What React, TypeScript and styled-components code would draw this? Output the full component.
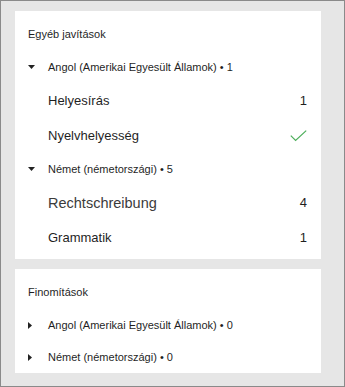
import React from 'react';
import styled, { createGlobalStyle } from 'styled-components';

const GlobalStyle = createGlobalStyle`
  html, body {
    margin: 0;
    padding: 0;
    background: #e6e6e6;
  }
  * {
    box-sizing: border-box;
  }
`;

interface Item {
  label: string;
  count?: number;
  size: number;
  color?: string;
  done?: boolean;
}

interface Language {
  name: string;
  total: number;
  open: boolean;
  items: Item[];
}

const corrections: Language[] = [
  {
    name: 'Angol (Amerikai Egyesült Államok)',
    total: 1,
    open: true,
    items: [
      { label: 'Helyesírás', count: 1, size: 13 },
      { label: 'Nyelvhelyesség', size: 13, done: true },
    ],
  },
  {
    name: 'Német (németországi)',
    total: 5,
    open: true,
    items: [
      { label: 'Rechtschreibung', count: 4, size: 14.5, color: '#3b3b3b' },
      { label: 'Grammatik', count: 1, size: 13 },
    ],
  },
];

const refinements: Language[] = [
  { name: 'Angol (Amerikai Egyesült Államok)', total: 0, open: false, items: [] },
  { name: 'Német (németországi)', total: 0, open: false, items: [] },
];

const Caret = ({ open }: { open: boolean }) =>
  open ? (
    <svg width="7" height="4" viewBox="0 0 7 4">
      <path d="M0 0 H7 L3.5 4 Z" fill="#222" />
    </svg>
  ) : (
    <svg width="4" height="7" viewBox="0 0 4 7">
      <path d="M0 0 V7 L4 3.5 Z" fill="#222" />
    </svg>
  );

const Check = () => (
  <svg width="17" height="12" viewBox="0 0 17 12">
    <path d="M0.8 5.6 L5.6 10.4 L16.2 0.6" fill="none" stroke="#4cae5a" strokeWidth="1.2" />
  </svg>
);

const LanguageGroup = ({ lang }: { lang: Language }) => (
  <>
    <LangRow>
      <CaretBox>
        <Caret open={lang.open} />
      </CaretBox>
      <LangName>
        {lang.name} • {lang.total}
      </LangName>
    </LangRow>
    {lang.items.map((item) => (
      <ItemRow key={item.label}>
        <ItemLabel $size={item.size} $color={item.color}>
          {item.label}
        </ItemLabel>
        {item.done ? <Check /> : <Count>{item.count}</Count>}
      </ItemRow>
    ))}
  </>
);

export default function App() {
  return (
    <>
      <GlobalStyle />
      <Frame>
        <Card>
          <Title>Egyéb javítások</Title>
          {corrections.map((lang) => (
            <LanguageGroup key={lang.name} lang={lang} />
          ))}
        </Card>
        <Card $last>
          <Title>Finomítások</Title>
          {refinements.map((lang) => (
            <LanguageGroup key={lang.name} lang={lang} />
          ))}
        </Card>
      </Frame>
    </>
  );
}

const Frame = styled.div`
  width: 345px;
  height: 387px;
  background: #e6e6e6;
  border: 1px solid #8a8a8a;
  padding: 10px 23px 0 14px;
  display: flex;
  flex-direction: column;
  gap: 10px;
  font-family: 'Liberation Sans', Arial, sans-serif;
  color: #1f1f1f;
`;

const Card = styled.div<{ $last?: boolean }>`
  background: #ffffff;
  padding: 6px 14px ${(p) => (p.$last ? '0' : '4px')} 13px;
  display: flex;
  flex-direction: column;
`;

const Title = styled.div`
  height: 34px;
  display: flex;
  align-items: center;
  font-size: 11px;
`;

const LangRow = styled.div`
  height: 32px;
  display: flex;
  align-items: center;
`;

const CaretBox = styled.div`
  width: 20px;
  display: flex;
  align-items: center;
`;

const LangName = styled.span`
  font-size: 11px;
`;

const ItemRow = styled.div`
  height: 35px;
  padding-left: 20px;
  display: flex;
  align-items: center;
  justify-content: space-between;
`;

const ItemLabel = styled.span<{ $size: number; $color?: string }>`
  font-size: ${(p) => p.$size}px;
  color: ${(p) => p.$color ?? '#1f1f1f'};
`;

const Count = styled.span`
  font-size: 13px;
`;
